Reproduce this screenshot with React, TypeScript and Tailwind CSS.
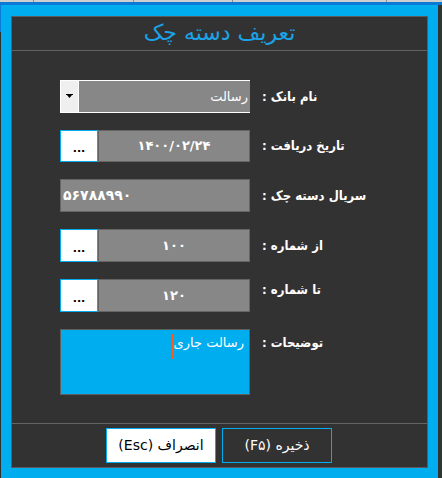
import React from "react";

const AR = { fontFamily: '"DejaVu Sans", "Noto Sans", sans-serif' };
const ARC = { fontFamily: '"DejaVu Sans Condensed", "DejaVu Sans", sans-serif' };

function Dots() {
  return (
    <div className="w-[38px] h-full bg-white border border-[#00adef] flex items-end justify-center pb-[7px] shrink-0">
      <span className="text-[11px] leading-none font-bold text-black" style={AR}>...</span>
    </div>
  );
}

function Label({ text, cls = "" }: { text: string; cls?: string }) {
  return (
    <div dir="rtl" className={"text-left text-white text-[13px] font-bold font-stretch-condensed leading-[20px] whitespace-nowrap " + cls} style={ARC}>
      {text}
    </div>
  );
}

export default function App() {
  return (
    <div className="w-[442px] h-[478px] bg-[#2f2f2f] overflow-hidden flex flex-col">
      <div className="h-[2px] bg-[#cfcfcf] relative shrink-0">
        <div className="absolute left-[33px] top-0 w-px h-[2px] bg-[#8a8a8a]" />
        <div className="absolute left-[133px] top-0 w-px h-[2px] bg-[#8a8a8a]" />
        <div className="absolute left-[232px] top-0 w-px h-[2px] bg-[#8a8a8a]" />
        <div className="absolute left-[386px] top-0 w-px h-[2px] bg-[#8a8a8a]" />
      </div>
      <div className="h-[3px] bg-[#0b79d6] shrink-0" />
      <div className="flex flex-1">
        <div className="w-px flex flex-col">
          <div className="h-[27px] bg-[#0b79d6]" />
        </div>
        <div className="w-[437px] bg-[#00adef] pt-[11px] px-[10px] pb-[10px]">
          <div className="w-[417px] h-[452px] border border-[#5b5b5b] bg-[#323232] flex flex-col">
            <div className="h-[34px] border-b border-[#626262] flex items-center justify-center">
              <span dir="rtl" className="text-[22px] leading-none text-[#1aa3e6] mt-[-2px]" style={AR}>
                تعریف دسته چک
              </span>
            </div>

            <div className="pl-[48px] flex flex-col">
              {/* Bank name */}
              <div className="mt-[29px] h-[33px] flex items-center gap-[12px]">
                <div className="w-[190px] h-full flex border-y border-l border-white">
                  <div className="w-[17px] h-full bg-[#efefef] flex items-center justify-center">
                    <svg width="7" height="5" viewBox="0 0 7 5">
                      <rect x="0" y="0" width="7" height="1" fill="#000" />
                      <path d="M1 1 L6 1 L3.5 4 Z" fill="#000" />
                    </svg>
                  </div>
                  <div className="w-px h-full bg-white" />
                  <div className="flex-1 h-full bg-[#878787] flex items-center justify-end pr-[2px]">
                    <span dir="rtl" className="text-white text-[13px]" style={AR}>رسالت</span>
                  </div>
                </div>
                <Label text="نام بانک :" />
              </div>

              {/* Date */}
              <div className="mt-[17px] h-[32px] flex items-center gap-[12px]">
                <div className="w-[190px] h-full flex">
                  <Dots />
                  <div className="flex-1 h-full bg-[#878787] border border-[#656565] flex items-center justify-center">
                    <span dir="ltr" className="text-white text-[13px] font-bold tracking-[0.4px]" style={AR}>۱۴۰۰/۰۲/۲۴</span>
                  </div>
                </div>
                <Label text="تاریخ دریافت :" />
              </div>

              {/* Serial */}
              <div className="mt-[17px] h-[33px] flex items-center gap-[12px]">
                <div className="w-[190px] h-full bg-[#878787] border border-[#656565] flex items-center pl-[2px]">
                  <span dir="ltr" className="text-white text-[14px] font-bold tracking-[1.2px]" style={AR}>۵۶۷۸۸۹۹۰</span>
                </div>
                <Label text="سریال دسته چک :" />
              </div>

              {/* From number */}
              <div className="mt-[17px] h-[33px] flex items-center gap-[12px]">
                <div className="w-[190px] h-full flex">
                  <Dots />
                  <div className="flex-1 h-full bg-[#878787] border border-[#656565] flex items-center justify-center">
                    <span dir="ltr" className="text-white text-[13px] font-bold tracking-[3px]" style={AR}>۱۰۰</span>
                  </div>
                </div>
                <Label text="از شماره :" />
              </div>

              {/* To number */}
              <div className="mt-[17px] h-[33px] flex items-start gap-[12px]">
                <div className="w-[190px] h-full flex">
                  <Dots />
                  <div className="flex-1 h-full bg-[#878787] border border-[#656565] flex items-center justify-center">
                    <span dir="ltr" className="text-white text-[13px] font-bold tracking-[3px]" style={AR}>۱۲۰</span>
                  </div>
                </div>
                <Label text="تا شماره :" cls="mt-[1px]" />
              </div>

              {/* Notes */}
              <div className="mt-[17px] h-[66px] flex items-start gap-[12px]">
                <div className="w-[190px] h-full bg-[#00adef] border border-[#5f5f5f] flex justify-end pr-[5px] pt-[3px]">
                  <div className="flex items-start">
                    <div className="w-[2px] h-[25px] bg-[#ff5a1a] mt-[1px]" />
                    <span dir="rtl" className="text-white text-[13px] leading-[20px]" style={AR}>رسالت جاری</span>
                  </div>
                </div>
                <Label text="توضیحات :" cls="mt-[4px]" />
              </div>
            </div>

            <div className="mt-[28px] h-px bg-[#656565]" />

            <div className="mt-[4px] flex pl-[94px] gap-[6px]">
              <div className="w-[110px] h-[35px] bg-white border border-[#00adef] flex items-center justify-center">
                <span dir="rtl" className="text-black text-[14px]" style={AR}>انصراف (Esc)</span>
              </div>
              <div className="w-[110px] h-[35px] bg-[#323232] border border-[#00adef] flex items-center justify-center">
                <span dir="rtl" className="text-white text-[14px]" style={AR}>ذخیره (F۵)</span>
              </div>
            </div>
          </div>
        </div>
        <div className="flex-1 bg-[#333333]" />
      </div>
    </div>
  );
}
